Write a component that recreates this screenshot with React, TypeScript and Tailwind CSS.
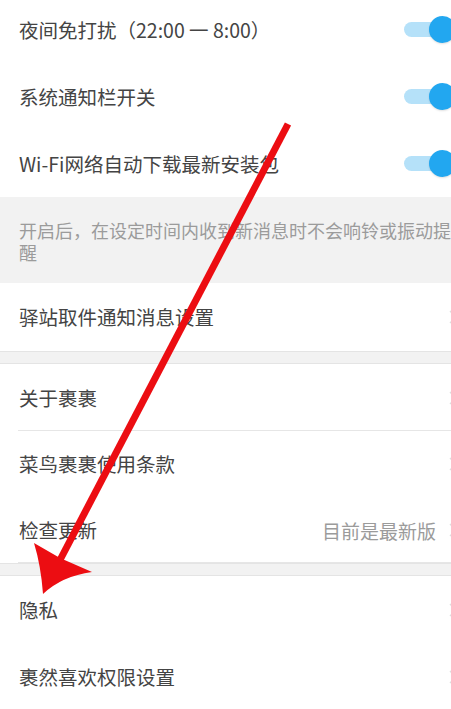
import clsx from 'clsx';

const FONT = { fontFamily: '"Noto Sans CJK SC", "Noto Sans", sans-serif' };

function Toggle() {
  return (
    <div className="relative h-[27px] w-[52px] mr-[-5px] shrink-0">
      <div className="absolute left-0 right-0 top-[6px] h-[15px] rounded-full bg-[#b5e1f9]" />
      <div className="absolute right-0 top-0 h-[27px] w-[27px] rounded-full bg-[#22a7f0] shadow-[0_1px_2px_rgba(0,0,0,0.12)]" />
    </div>
  );
}

function Chevron() {
  return (
    <svg width="10" height="16" viewBox="0 0 10 16" className="mr-[-7px] shrink-0">
      <path d="M2 2 L8 8 L2 14" fill="none" stroke="#dedede" strokeWidth="1.4" />
    </svg>
  );
}

interface RowProps {
  label: string;
  height?: string;
  right?: React.ReactNode;
  divider?: boolean;
}

function Row({ label, height = 'h-[67px]', right, divider }: RowProps) {
  return (
    <div className={clsx('relative flex items-center justify-between bg-white pl-[19px]', height)}>
      <span className="text-[19.5px] leading-none text-[#444444]">{label}</span>
      {right}
      {divider && <div className="absolute bottom-0 left-[18px] right-0 h-px bg-[#e6e6e6]" />}
    </div>
  );
}

function Gap() {
  return <div className="h-[13px] border-y border-[#e4e4e4] bg-[#f2f2f2]" />;
}

// red annotation arrow drawn over the screenshot
function Arrow() {
  return (
    <svg
      className="pointer-events-none absolute left-0 top-0"
      width="451"
      height="709"
      viewBox="0 0 451 709"
    >
      <line x1="288" y1="124" x2="60" y2="560" stroke="#ec0d12" strokeWidth="7" />
      <path d="M34 543 L60 558 L92 572 Q62 576 43 594 Q41 566 34 543 Z" fill="#ec0d12" />
    </svg>
  );
}

export default function App() {
  return (
    <div className="relative h-[709px] w-[451px] overflow-hidden bg-white" style={FONT}>
      <div className="-mt-[4px]">
        <Row label="夜间免打扰（22:00 一 8:00）" right={<Toggle />} />
        <Row label="系统通知栏开关" right={<Toggle />} />
        <Row label="Wi-Fi网络自动下载最新安装包" right={<Toggle />} />
      </div>

      <div className="h-[86px] bg-[#f2f2f2] pl-[19px] pt-[22px] text-[18px] leading-[22px] text-[#9b9b9b] whitespace-nowrap">
        <div>开启后，在设定时间内收到新消息时不会响铃或振动提</div>
        <div>醒</div>
      </div>

      <Row label="驿站取件通知消息设置" height="h-[68px]" right={<Chevron />} />
      <Gap />

      <Row label="关于裹裹" height="h-[67px]" right={<Chevron />} divider />
      <Row label="菜鸟裹裹使用条款" height="h-[66px]" right={<Chevron />} />
      <Row
        label="检查更新"
        height="h-[66px]"
        divider
        right={
          <div className="flex items-center">
            <span className="mr-[12px] text-[19px] leading-none text-[#9b9b9b]">目前是最新版</span>
            <Chevron />
          </div>
        }
      />
      <Gap />

      <Row label="隐私" height="h-[68px]" right={<Chevron />} />
      <Row label="裹然喜欢权限设置" height="h-[66px]" right={<Chevron />} />

      <Arrow />
    </div>
  );
}
